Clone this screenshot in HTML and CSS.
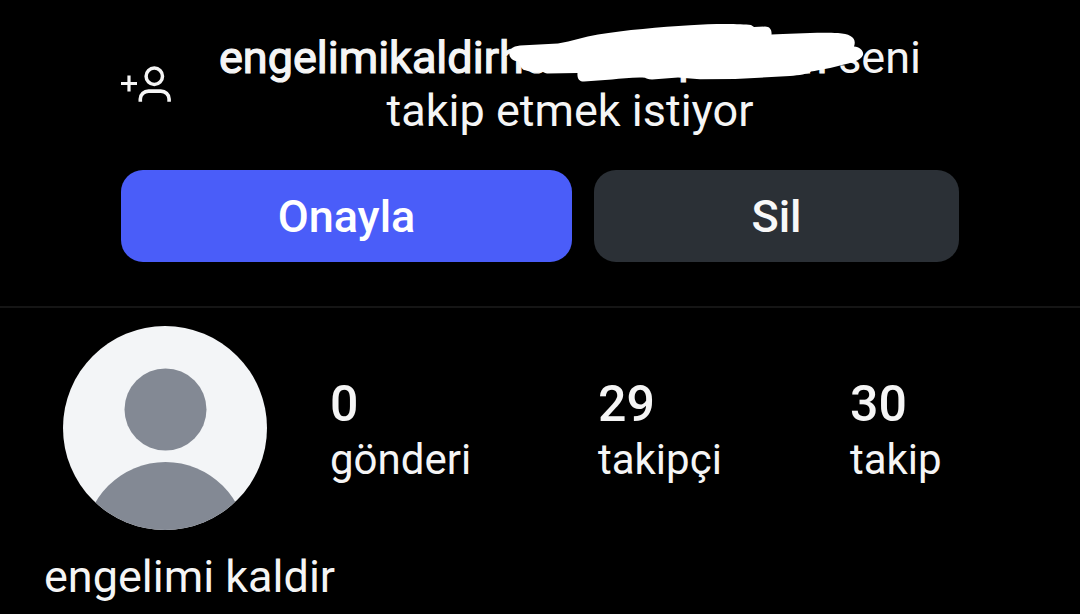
FILE: index.html
```html
<!DOCTYPE html>
<html lang="tr">
<head>
    <meta charset="UTF-8">
    <meta name="viewport" content="width=device-width, initial-scale=1.0">
    <title>Takip isteği</title>
    <link rel="stylesheet" href="styles.css">
</head>
<body>
    <!-- Follow request -->
    <section class="request">
        <div class="request-row">
            <svg class="add-icon" width="60" height="50" viewBox="0 0 60 50" fill="none" stroke="#f5f5f5">
                <path d="M0 22.500h16M8 14.500v16" stroke-width="3.200"/>
                <circle cx="33.300" cy="15.300" r="8.200" stroke-width="3.500"/>
                <path d="M19.300 40.700v-2.700c0-4.500 3.800-7.900 8.300-7.900h12.200c4.500 0 8.300 3.400 8.300 7.900v2.700" stroke-width="3.600"/>
            </svg>
            <p class="request-text">
                <span class="username">engelimikaldirho<span class="gap gap-1"></span>p<span class="gap gap-2"></span>n</span> seni<br>takip etmek istiyor
                <svg class="scribble" width="380" height="70" viewBox="500 15 380 70" fill="#fff">
                    <path d="M520 45.500L558 43.500C572 41 584 37 598 34.500C625 30 660 27 690 25.200C712 23.500 740 23.500 751 25L754 27L765 26.500C770 26.500 772 30 771.500 34.500C790 33.500 820 32 838 33C851 34 857 38 854 46.500C860 47 864 51 863 55C861 61 850 63 842 65C832 68 820 70 811 71.500C808 74 799 75.300 790 76L735 79L700 79.300L678 77.500L652 79.500C648 79.500 646 78 645 77.700C635 77 622 78.500 612 79.500L584 81.600C579 81.600 577 78 577.500 73L547 73.500C544 73 543 71.500 541 71.500C536 73 526 71 523 69.500C520 67 520 64 519 61.500C508 61 506 50 515 46.500Z"/>
                </svg>
            </p>
        </div>
        <div class="buttons">
            <button class="btn btn-confirm">Onayla</button>
            <button class="btn btn-delete">Sil</button>
        </div>
    </section>

    <!-- Profile -->
    <section class="profile">
        <div class="profile-top">
            <svg class="avatar" width="204" height="204" viewBox="0 0 204 204">
                <clipPath id="round"><circle cx="102" cy="102" r="102"/></clipPath>
                <g clip-path="url(#round)">
                    <rect width="204" height="204" fill="#f3f5f7"/>
                    <circle cx="102.500" cy="83.500" r="41" fill="#838994"/>
                    <circle cx="102.500" cy="217" r="81" fill="#838994"/>
                </g>
            </svg>
            <div class="stats">
                <div class="stat"><b>0</b><span>gönderi</span></div>
                <div class="stat"><b>29</b><span>takipçi</span></div>
                <div class="stat"><b>30</b><span>takip</span></div>
            </div>
        </div>
        <div class="name">engelimi kaldir</div>
    </section>
</body>
</html>
```

FILE: styles.css
```css
* { box-sizing: border-box; }
body { font-family: Roboto, sans-serif; background-color: #000; color: #f5f5f5; margin: 0; height: 614px; overflow: hidden; }
.request { height: 308px; padding: 30.5px 121px 0; border-bottom: 2px solid #151515; }
.request-row { display: flex; height: 139.8px; }
.add-icon { flex: none; margin-top: 30.5px; }
.request-text { flex: 1; position: relative; margin: 0; font-size: 45px; line-height: 53px; text-align: center; white-space: nowrap; }
.username { -webkit-text-stroke: 1.2px #f5f5f5; }
.gap { display: inline-block; }
.gap-1 { width: 129px; }
.gap-2 { width: 98.5px; }
/* brush stroke over the username */
.scribble { position: absolute; left: 319px; top: -15.5px; }
.buttons { display: grid; grid-template-columns: 451px 365px; gap: 22px; }
.btn { height: 92px; padding: 0; border: none; border-radius: 22px; color: #fff; font-family: inherit; font-size: 45px; font-weight: 500; cursor: pointer; }
.btn-confirm { background-color: #4a5df9; }
.btn-delete { background-color: #2b3036; color: #f8f8f8; }
.profile { padding: 18px 44px 0; }
.profile-top { display: flex; padding-left: 19px; }
.avatar { flex: none; }
.stats { display: grid; grid-template-columns: 268px 252px auto; margin: 50px 0 0 63px; }
.stat b { display: block; font-size: 50px; line-height: 56px; font-weight: 500; }
.stat span { display: block; font-size: 42px; line-height: 56px; }
.name { margin-top: 20px; font-size: 45px; line-height: 54px; }
```
